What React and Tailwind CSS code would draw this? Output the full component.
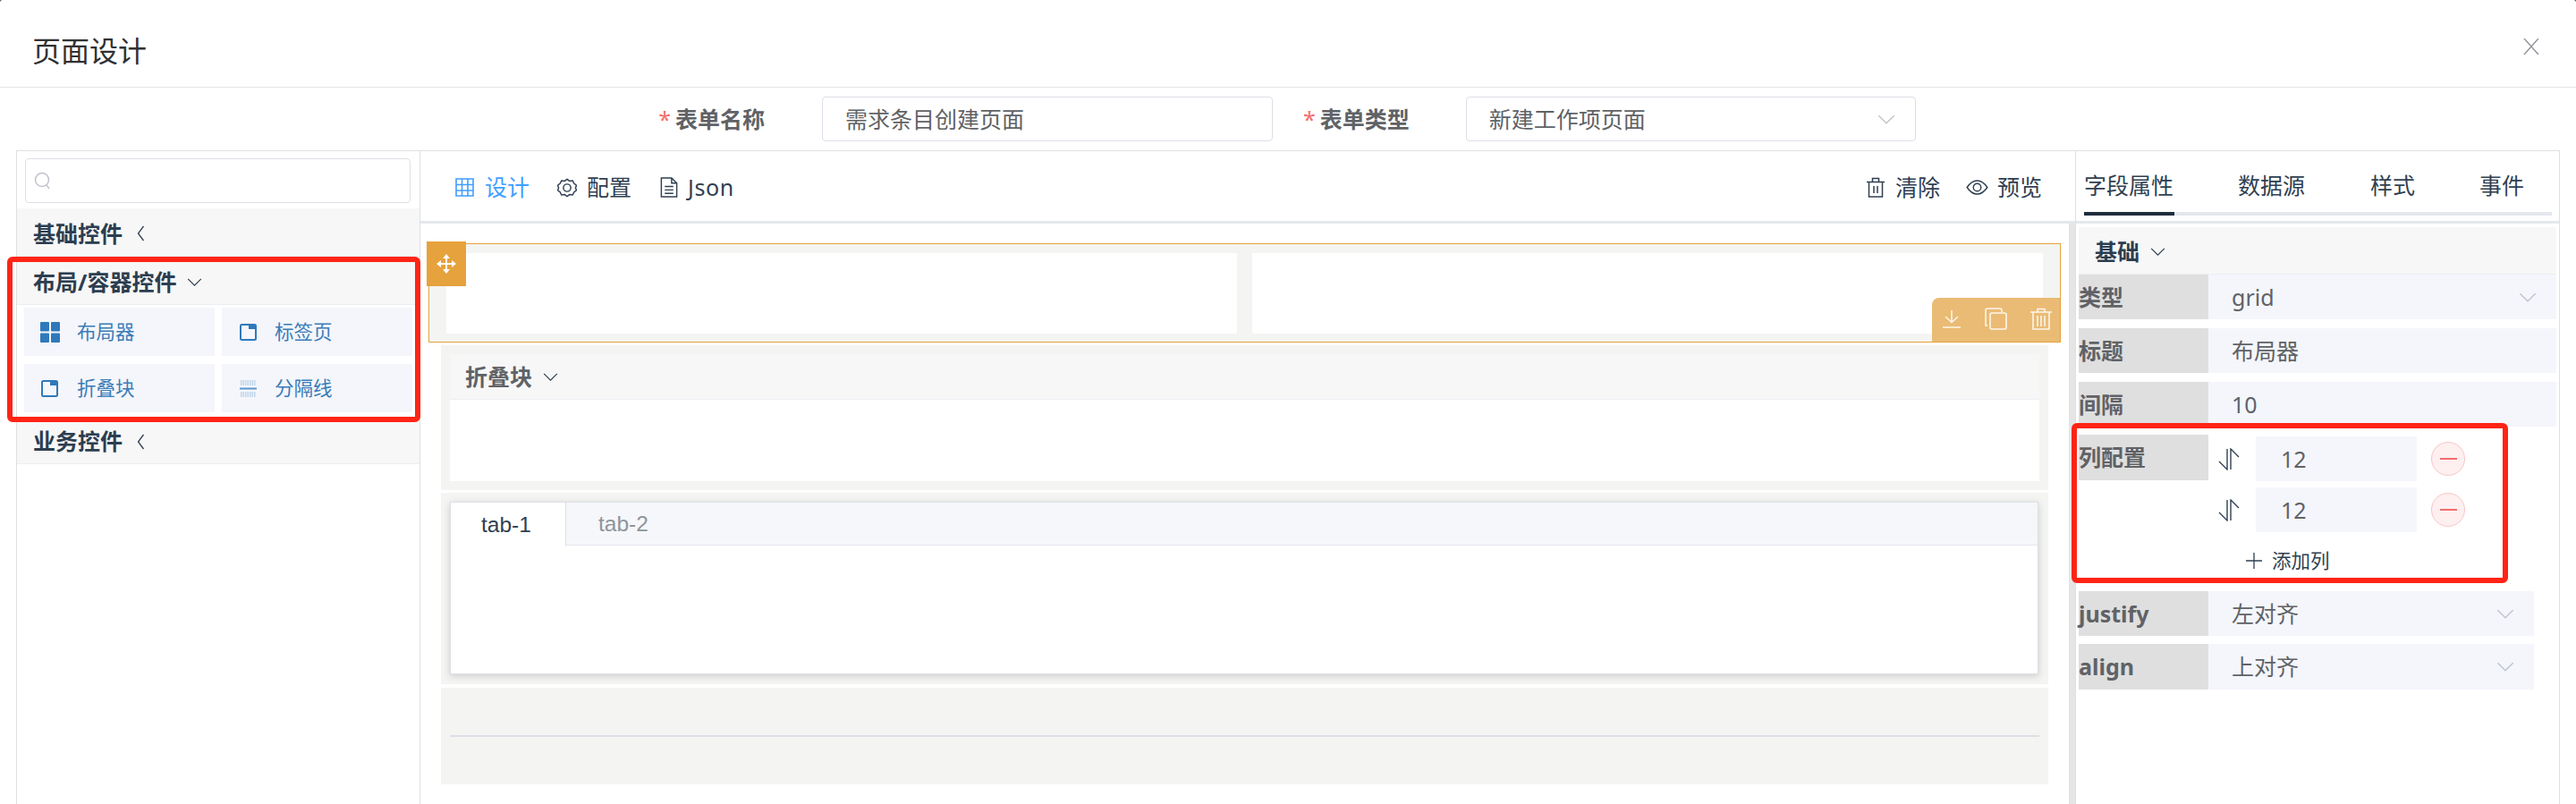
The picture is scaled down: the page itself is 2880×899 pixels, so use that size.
import React from 'react';

const FONT = 'font-["Noto_Sans","Noto_Sans_CJK_SC",sans-serif]';

function Chevron({ dir = 'down', className = '' }) {
  const pts = {
    down: '1,2 9,10 17,2',
    left: '8,1 2,9 8,17',
  };
  const box = dir === 'down' ? '0 0 18 12' : '0 0 10 18';
  return (
    <svg viewBox={box} className={className} fill="none" stroke="currentColor" strokeWidth="1.3">
      <polyline points={pts[dir]} />
    </svg>
  );
}

function Collapse({ title, open, className = '', textClass = 'text-[#2c3e50]' }) {
  return (
    <div className={`flex items-center bg-[#f7f7f7] border-b border-[#ebeef5] ${className}`}>
      <span className={`text-[25px] font-bold leading-none ${textClass}`}>{title}</span>
      <Chevron dir={open ? 'down' : 'left'} className={open ? 'w-[17px] h-[11px] ml-[12px] text-[#303f52]' : 'w-[11px] h-[18px] ml-[15px] text-[#303f52]'} />
    </div>
  );
}

function PageIcon() {
  return (
    <svg viewBox="0 0 19 19" className="w-[19px] h-[19px]" fill="none" stroke="#2f79ba" strokeWidth="2">
      <rect x="1" y="1" width="17" height="17" rx="1.5" />
      <rect x="10" y="1" width="8" height="5" fill="#2f79ba" stroke="none" />
    </svg>
  );
}

function WidgetItem({ icon, label, iconClass }) {
  return (
    <div className="w-[213px] h-[54px] bg-[#f4f6fb] flex items-center text-[#3b7cb8]">
      <div className={`w-[59px] ${iconClass}`}>{icon}</div>
      <span className="text-[21.5px] leading-none">{label}</span>
    </div>
  );
}

function Field({ label, value, select, className = '' }) {
  return (
    <div className={`flex h-[50px] ${className}`}>
      <div className="w-[145px] bg-[#dfdfdf] flex items-center text-[25px] font-bold text-[#606266] leading-none">{label}</div>
      <div className="flex-1 bg-[#f4f6fb] flex items-center justify-between pl-[26px] pr-[22px] text-[25px] text-[#606266] leading-none">
        <span>{value}</span>
        {select && <Chevron className="w-[20px] h-[13px] text-[#c0c4cc]" />}
      </div>
    </div>
  );
}

function ColumnRow({ className = '' }) {
  return (
    <div className={`flex items-center h-[50px] ${className}`}>
      <svg viewBox="0 0 24 25" className="w-[24px] h-[25px] ml-[11px] text-[#303f52]" fill="none" stroke="currentColor" strokeWidth="1.4">
        <path d="M10 1v23L1 15M14 24V1l9 9" />
      </svg>
      <div className="w-[180px] h-[50px] ml-[18px] bg-[#f4f6fb] flex items-center pl-[28px] text-[25px] text-[#606266] leading-none">12</div>
      <div className="w-[38px] h-[38px] ml-[16px] rounded-full bg-[#fef0f0] border border-[#fbc4c4] flex items-center justify-center">
        <div className="w-[19px] h-[1.5px] bg-[#f56c6c]" />
      </div>
    </div>
  );
}

export default function App() {
  return (
    <div className={`w-[2880px] h-[899px] bg-[#4d4d4d] overflow-hidden relative ${FONT}`}>
      <div className="h-full bg-white rounded-t-[3px]">
        {/* header */}
        <div className="h-[98px] border-b border-[#e4e4e4] flex justify-between pl-[36px] pr-[41px]">
          <span className="mt-[41px] text-[32px] leading-none text-[#303133]">页面设计</span>
          <svg viewBox="0 0 18 18" className="mt-[43px] w-[18px] h-[18px] text-[#909399]" fill="none" stroke="currentColor" strokeWidth="1.4">
            <path d="M1 0l16 18M17 0L1 18" />
          </svg>
        </div>

        {/* form */}
        <div className="h-[70px] flex items-center justify-center pr-[2px]">
          <div className="flex items-center">
            <span className="text-[#f56c6c] text-[25px] leading-none mr-[5px]">*</span>
            <span className="text-[25px] font-bold text-[#606266] leading-none">表单名称</span>
            <div className="w-[504px] h-[50px] ml-[64px] border border-[#dcdfe6] rounded-[4px] flex items-center pl-[25px] text-[25px] text-[#606266] leading-none">需求条目创建页面</div>
          </div>
          <div className="flex items-center ml-[34px]">
            <span className="text-[#f56c6c] text-[25px] leading-none mr-[5px]">*</span>
            <span className="text-[25px] font-bold text-[#606266] leading-none">表单类型</span>
            <div className="w-[503px] h-[50px] ml-[63px] border border-[#dcdfe6] rounded-[4px] flex items-center justify-between pl-[25px] pr-[22px] text-[25px] text-[#606266] leading-none">
              <span>新建工作项页面</span>
              <Chevron className="w-[20px] h-[13px] text-[#c0c4cc]" />
            </div>
          </div>
        </div>

        {/* main */}
        <div className="mx-[18px] h-[731px] border border-b-0 border-[#e0e0e0] flex">
          {/* left panel */}
          <div className="w-[451px] border-r border-[#e0e0e0]">
            <div className="mt-[8px] ml-[9px] mr-[10px] h-[50px] border border-[#dcdfe6] rounded-[4px] flex items-center pl-[9px]">
              <svg viewBox="0 0 20 20" className="w-[20px] h-[20px] text-[#c0c4cc]" fill="none" stroke="currentColor" strokeWidth="1.5">
                <circle cx="9" cy="9" r="7.5" />
                <path d="M14 15l3 4" />
              </svg>
            </div>
            <Collapse title="基础控件" className="mt-[6px] h-[54px] pl-[18px] pt-[3px]" />
            <Collapse title="布局/容器控件" open className="h-[54px] pl-[18px] pt-[3px]" />
            <div className="pt-[3px] pl-[8px] pb-[5px] flex flex-wrap gap-x-[8px] gap-y-[9px]">
              <WidgetItem
                label="布局器"
                iconClass="pl-[18px]"
                icon={
                  <svg viewBox="0 0 22 23" className="w-[22px] h-[23px]" fill="#2f79ba">
                    <rect x="0" y="0" width="10" height="10.5" rx="1" />
                    <rect x="12" y="0" width="10" height="10.5" rx="1" />
                    <rect x="0" y="12.5" width="10" height="10.5" rx="1" />
                    <rect x="12" y="12.5" width="10" height="10.5" rx="1" />
                  </svg>
                }
              />
              <WidgetItem label="标签页" iconClass="pl-[20px]" icon={<PageIcon />} />
              <WidgetItem label="折叠块" iconClass="pl-[19px]" icon={<PageIcon />} />
              <WidgetItem
                label="分隔线"
                iconClass="pl-[20px]"
                icon={
                  <svg viewBox="0 0 19 19" className="w-[19px] h-[19px]" fill="none" stroke="#8db5dc" strokeWidth="1">
                    <path d="M1 1h17M1 3h17M1 5h17M1 14h17M1 16h17M1 18h17" strokeDasharray="1.5 1" />
                    <path d="M0 9.5h19" stroke="#5b96cc" strokeWidth="2" />
                  </svg>
                }
              />
            </div>
            <Collapse title="业务控件" className="h-[53px] pl-[18px] pt-[3px]" />
          </div>

          {/* center panel */}
          <div className="w-[1850px] flex flex-col">
            <div className="h-[81px] border-b-[3px] border-[#e4e7ed] flex items-center justify-between pl-[39px] pr-[37px] pt-[3px] text-[25px] leading-none text-[#303f52]">
              <div className="flex items-center">
                <div className="flex items-center text-[#409eff]">
                  <svg viewBox="0 0 21 21" className="w-[21px] h-[21px]" fill="none" stroke="currentColor" strokeWidth="1.6">
                    <path d="M1 1h19v19H1zM1 7.5h19M1 14h19M7.5 1v19M14 1v19" />
                  </svg>
                  <span className="ml-[12px]">设计</span>
                </div>
                <div className="flex items-center ml-[31px]">
                  <svg viewBox="0 0 24 24" className="w-[22px] h-[22px]" fill="none" stroke="currentColor" strokeWidth="1.6">
                    <path d="M12 1.5l3 2.2 3.8-.4 1.6 3.4 3 2.3-1.1 3 1.1 3-3 2.3-1.6 3.4-3.8-.4-3 2.2-3-2.2-3.8.4-1.6-3.4-3-2.3 1.1-3-1.1-3 3-2.3 1.6-3.4 3.8.4z" />
                    <circle cx="12" cy="12" r="4.5" />
                  </svg>
                  <span className="ml-[11px]">配置</span>
                </div>
                <div className="flex items-center ml-[32px]">
                  <svg viewBox="0 0 20 24" className="w-[20px] h-[23px]" fill="none" stroke="currentColor" strokeWidth="1.5">
                    <path d="M1 1h12l6 6v16H1zM13 1v6h6M5 11h10M5 15h10M5 19h10" />
                  </svg>
                  <span className="ml-[11px] tracking-[0.6px]">Json</span>
                </div>
              </div>
              <div className="flex items-center">
                <div className="flex items-center">
                  <svg viewBox="0 0 20 23" className="w-[20px] h-[23px]" fill="none" stroke="currentColor" strokeWidth="1.5">
                    <path d="M0 5.5h20M6.5 5.5V1.5h7v4M2.5 5.5v16.500h15V5.500M8 10v8M12 10v8" />
                  </svg>
                  <span className="ml-[12px]">清除</span>
                </div>
                <div className="flex items-center ml-[29px]">
                  <svg viewBox="0 0 26 18" className="w-[25px] h-[17px]" fill="none" stroke="currentColor" strokeWidth="1.5">
                    <path d="M1 9C5 3 9 1 13 1s8 2 12 8c-4 6-8 8-12 8S5 15 1 9z" />
                    <circle cx="13" cy="9" r="4.5" />
                  </svg>
                  <span className="ml-[10px]">预览</span>
                </div>
              </div>
            </div>

            <div className="flex flex-1">
              <div className="w-[1843px] pt-[22px]">
                {/* grid widget */}
                <div className="relative ml-[9px] w-[1825px] h-[111px] bg-[#f4f4f2] border border-[#e6a23c] pt-[10px] px-[19px] flex gap-[17px]">
                  <div className="flex-1 h-[90px] bg-white" />
                  <div className="flex-1 h-[90px] bg-white" />
                  <div className="absolute -left-[3px] -top-[3px] w-[44px] h-[50px] bg-[#e6a23c] flex items-center justify-center">
                    <svg viewBox="0 0 22 22" className="w-[22px] h-[22px]" fill="white">
                      <path d="M11 0l4 5h-3v5h5V7l5 4-5 4v-3h-5v5h3l-4 5-4-5h3v-5H5v3l-5-4 5-4v3h5V5H7z" />
                    </svg>
                  </div>
                  <div className="absolute right-0 bottom-0 w-[143px] h-[49px] bg-[#eabb74] rounded-tl-[8px] flex items-center text-[#fdf6ea] pb-[2px]">
                    <svg viewBox="0 0 20 20" className="w-[20px] h-[20px] ml-[12px]" fill="none" stroke="currentColor" strokeWidth="1.6">
                      <path d="M10 0v13M3 7l7 6.500L17 7M0 19h20" />
                    </svg>
                    <svg viewBox="0 0 25 25" className="w-[25px] h-[25px] ml-[27px]" fill="none" stroke="currentColor" strokeWidth="1.6">
                      <rect x="6" y="6" width="18" height="18" rx="2" />
                      <path d="M3 20H1V3a2 2 0 012-2h14a2 2 0 012 2v2" />
                    </svg>
                    <svg viewBox="0 0 24 25" className="w-[24px] h-[25px] ml-[26px]" fill="none" stroke="currentColor" strokeWidth="1.6">
                      <path d="M0 5h24M8 5V1.500h8V5M3 5v19h18V5M8 9v12M12 9v12M16 9v12" />
                    </svg>
                  </div>
                </div>

                {/* collapse widget */}
                <div className="ml-[23px] mt-[3px] w-[1797px] h-[162px] bg-[#f4f4f2] p-[10px]">
                  <Collapse title="折叠块" open textClass="text-[#606266]" className="h-[51px] pl-[17px]" />
                  <div className="h-[91px] bg-white" />
                </div>

                {/* tabs widget */}
                <div className="ml-[23px] mt-[3px] w-[1797px] h-[214px] bg-[#f4f4f2] pt-[10px] pl-[10px]">
                  <div className="w-[1776px] h-[193px] bg-white border border-[#dcdfe6] shadow-[0_2px_8px_rgba(0,0,0,0.16)]">
                    <div className="h-[48px] bg-[#f5f7fa] border-b border-[#e4e7ed] flex font-['Liberation_Sans',sans-serif] text-[24.5px] leading-none">
                      <div className="w-[129px] h-[48px] bg-white border-r border-[#dcdfe6] flex items-center pl-[34px] pt-[2px] text-[#303f52]">tab-1</div>
                      <div className="flex items-center pl-[36px] pt-[2px] text-[#909399]">tab-2</div>
                    </div>
                  </div>
                </div>

                {/* divider widget */}
                <div className="ml-[23px] mt-[4px] w-[1797px] h-[108px] bg-[#f4f4f2] pt-[53px] px-[10px]">
                  <div className="h-[2px] bg-[#dcdfe6]" />
                </div>
              </div>
              <div className="w-[7px] bg-[#e5e5e5]" />
            </div>
          </div>

          {/* right panel */}
          <div className="w-[541px] border-l border-[#e0e0e0] flex flex-col">
            <div className="h-[81px] border-b-[3px] border-[#e4e7ed] pl-[9px] pr-[8px] pt-[24px]">
              <div className="flex items-center h-[28px] text-[25px] leading-none text-[#303f52]">
                <span>字段属性</span>
                <span className="ml-[72px]">数据源</span>
                <span className="ml-[73px]">样式</span>
                <span className="ml-[72px]">事件</span>
              </div>
              <div className="mt-[16px] h-[4px] bg-[#e4e7ed]">
                <div className="w-[101px] h-[4px] bg-[#1f2d3d]" />
              </div>
            </div>
            <div className="pt-[4px] pl-[3px] pr-[3px]">
              <Collapse title="基础" open className="h-[53px] pl-[18px] pt-[3px]" />
              <Field label="类型" value="grid" select className="mb-[10px]" />
              <Field label="标题" value="布局器" className="mb-[10px]" />
              <Field label="间隔" value="10" className="mb-[9px]" />
              <div className="flex">
                <div className="w-[145px] h-[51px] bg-[#dfdfdf] flex items-center text-[25px] font-bold text-[#606266] leading-none">列配置</div>
                <div className="pt-[2px]">
                  <ColumnRow className="mb-[7px]" />
                  <ColumnRow />
                  <div className="flex items-center h-[32px] mt-[16px] ml-[42px] text-[#303f52]">
                    <svg viewBox="0 0 18 18" className="w-[18px] h-[18px]" fill="none" stroke="currentColor" strokeWidth="1.3">
                      <path d="M9 0v18M0 9h18" />
                    </svg>
                    <span className="ml-[11px] text-[21.5px] leading-none">添加列</span>
                  </div>
                </div>
              </div>
              <div className="w-[509px] mt-[18px]">
                <Field label="justify" value="左对齐" select className="mb-[9px]" />
                <Field label="align" value="上对齐" select className="h-[51px]" />
              </div>
            </div>
          </div>
        </div>
      </div>

      {/* red annotations */}
      <div className="absolute left-[8px] top-[287px] w-[462px] h-[185px] border-[6px] border-[#ff2415] rounded-[6px]" />
      <div className="absolute left-[2316px] top-[473px] w-[488px] h-[179px] border-[6px] border-[#ff2415] rounded-[6px]" />
    </div>
  );
}
